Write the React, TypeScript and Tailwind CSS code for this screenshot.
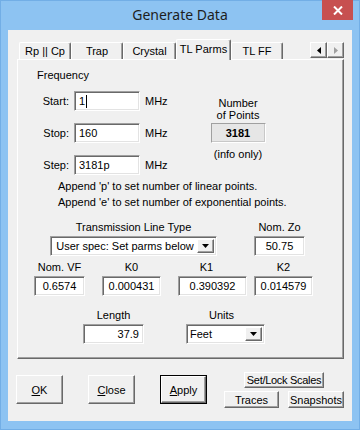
import React from 'react';

const sunken =
  'border border-t-[#a0a0a0] border-l-[#a0a0a0] border-b-white border-r-white shadow-[inset_1px_1px_0_#696969,inset_-1px_-1px_0_#e3e3e3] bg-white';
const raised =
  'border border-t-white border-l-white border-b-[#696969] border-r-[#696969] shadow-[inset_-1px_-1px_0_#a0a0a0] bg-[#f0f0f0]';

const DownArrow: React.FC<{ color?: string }> = ({ color = '#000' }) => (
  <svg width="7" height="4" viewBox="0 0 7 4">
    <path d="M0 0h7L3.5 4z" fill={color} />
  </svg>
);

const Field: React.FC<{ value: string; w: string; align?: string; caret?: boolean }> = ({
  value,
  w,
  align = 'text-center',
  caret,
}) => (
  <div className={`${sunken} ${w} h-[20px] px-[4px] flex items-center leading-[14px] ${align}`}>
    <span className="flex-1">
      {value}
      {caret && <span className="inline-block w-px h-[13px] bg-black align-middle ml-px" />}
    </span>
  </div>
);

const Combo: React.FC<{ value: string; w: string; center?: boolean }> = ({ value, w, center }) => (
  <div className={`${sunken} ${w} h-[20px] flex items-center p-[2px]`}>
    <span className={`flex-1 leading-[14px] ${center ? 'text-center' : 'pl-[1px]'}`}>{value}</span>
    <div className={`${raised} w-[17px] h-full flex items-center justify-center`}>
      <DownArrow />
    </div>
  </div>
);

const Tab: React.FC<{ label: string; w: string; active?: boolean }> = ({ label, w, active }) => (
  <div
    className={`${w} ${
      active ? 'h-[21px] -mb-px relative z-10 pb-[3px]' : 'h-[17px]'
    } bg-[#f0f0f0] border-t border-l border-r border-t-white border-l-white border-r-[#696969] rounded-t-[2px] shadow-[inset_-1px_0_0_#a0a0a0] flex items-center justify-center leading-[14px]`}
  >
    {label}
  </div>
);

const Btn: React.FC<{ children: React.ReactNode; cls: string }> = ({ children, cls }) => (
  <div className={`${raised} ${cls} flex items-center justify-center leading-[14px] whitespace-nowrap`}>
    {children}
  </div>
);

export default function App() {
  return (
    <div
      className="w-[360px] h-[430px] bg-[#8dc3f2] border border-[#72aee6] flex flex-col text-[11px] text-black"
      style={{ fontFamily: '"Liberation Sans", Arial, sans-serif' }}
    >
      {/* title bar */}
      <div className="h-[29px] flex items-start shrink-0">
        <div className="w-[37px]" />
        <div
          className="flex-1 text-center text-[14px] leading-[28px] text-[#1e1e1e]"
          style={{ fontFamily: '"Noto Sans", "Open Sans", sans-serif' }}
        >
          Generate Data
        </div>
        <div className="w-[31px] h-[20px] -mt-px mr-[6px] bg-[#c75050] flex items-center justify-center">
          <svg width="10" height="9" viewBox="0 0 10 9">
            <path d="M1 0.5l8 8M9 0.5l-8 8" stroke="#fff" strokeWidth="2" />
          </svg>
        </div>
      </div>

      {/* client */}
      <div className="mx-[7px] h-[391px] bg-[#f0f0f0] flex flex-col">
        {/* tabs */}
        <div className="flex items-end pl-[11px] pt-[9px] h-[29px]">
          <Tab label="Rp || Cp" w="w-[52px]" />
          <Tab label="Trap" w="w-[52px]" />
          <Tab label="Crystal" w="w-[53px]" />
          <Tab label="TL Parms" w="w-[55px]" active />
          <Tab label="TL FF" w="w-[52px]" />
          <div className="self-start mt-[3px] ml-[27px] flex">
            <div className={`${raised} w-[17px] h-[16px] flex items-center justify-center`}>
              <svg width="4" height="7" viewBox="0 0 4 7">
                <path d="M4 0v7L0 3.5z" fill="#000" />
              </svg>
            </div>
            <div className={`${raised} w-[17px] h-[16px] flex items-center justify-center`}>
              <svg width="4" height="7" viewBox="0 0 4 7">
                <path d="M0 0v7L4 3.5z" fill="#a0a0a0" />
              </svg>
            </div>
          </div>
        </div>

        {/* panel */}
        <div className="ml-[9px] w-[327px] h-[300px] border border-t-white border-l-white border-b-[#696969] border-r-[#696969] shadow-[inset_-1px_-1px_0_#a0a0a0] flex flex-col">
          {/* frequency + number of points */}
          <div className="flex">
            <div className="pl-[19px] w-[180px] flex flex-col">
              <div className="mt-[8px] leading-[14px]">Frequency</div>
              {[
                ['Start:', '1', 'mt-[9px]'],
                ['Stop:', '160', 'mt-[12px]'],
                ['Step:', '3181p', 'mt-[12px]'],
              ].map(([lab, val, mt], i) => (
                <div key={lab} className={`flex items-center ${mt}`}>
                  <div className="w-[32px] text-right leading-[14px]">{lab}</div>
                  <Field value={val} w="w-[66px] ml-[5px]" align="text-left" caret={i === 0} />
                  <div className="ml-[5px] leading-[14px]">MHz</div>
                </div>
              ))}
            </div>
            <div className="w-[80px] flex flex-col items-center">
              <div className="mt-[37px] leading-[12px] text-center">
                Number
                <br />
                of Points
              </div>
              <div className="mt-[2px] w-[55px] h-[20px] bg-[#e6e6e6] border border-t-[#a0a0a0] border-l-[#a0a0a0] border-b-white border-r-white shadow-[inset_-1px_-1px_0_#c8c8c8] flex items-center justify-center font-bold">
                3181
              </div>
              <div className="mt-[4px] leading-[14px]">(info only)</div>
            </div>
          </div>

          {/* hints */}
          <div className="mt-[3px] pl-[40px] leading-[16px]">
            <div>Append 'p' to set number of linear points.</div>
            <div>Append 'e' to set number of exponential points.</div>
          </div>

          {/* line type */}
          <div className="mt-[10px] pl-[32px] flex">
            <div className="w-[167px] flex flex-col items-center">
              <div className="leading-[14px]">Transmission Line Type</div>
              <div className="mt-[2px]">
                <Combo value="User spec: Set parms below" w="w-[167px]" center />
              </div>
            </div>
            <div className="ml-[37px] w-[51px] flex flex-col items-center">
              <div className="leading-[14px]">Nom. Zo</div>
              <div className="mt-[2px]">
                <Field value="50.75" w="w-[51px]" />
              </div>
            </div>
          </div>

          {/* parameters */}
          <div className="mt-[4px] pl-[16px] flex gap-[17px]">
            <div className="flex flex-col items-center">
              <div className="leading-[14px]">Nom. VF</div>
              <div className="mt-[2px]">
                <Field value="0.6574" w="w-[51px]" />
              </div>
            </div>
            <div className="flex flex-col items-center">
              <div className="leading-[14px]">K0</div>
              <div className="mt-[2px]">
                <Field value="0.000431" w="w-[59px]" />
              </div>
            </div>
            <div className="flex flex-col items-center">
              <div className="leading-[14px] pr-[12px]">K1</div>
              <div className="mt-[2px]">
                <Field value="0.390392" w="w-[69px]" />
              </div>
            </div>
            <div className="flex flex-col items-center -ml-[10px]">
              <div className="leading-[14px]">K2</div>
              <div className="mt-[2px]">
                <Field value="0.014579" w="w-[59px]" />
              </div>
            </div>
          </div>

          {/* length / units */}
          <div className="mt-[12px] pl-[65px] flex gap-[42px]">
            <div className="flex flex-col items-center">
              <div className="leading-[14px]">Length</div>
              <div className="mt-[2px]">
                <Field value="37.9" w="w-[61px]" align="text-right" />
              </div>
            </div>
            <div className="flex flex-col">
              <div className="leading-[14px] pl-[23px]">Units</div>
              <div className="mt-[2px]">
                <Combo value="Feet" w="w-[79px]" />
              </div>
            </div>
          </div>
        </div>

        {/* buttons */}
        <div className="flex items-start pl-[8px]">
          <Btn cls="mt-[16px] w-[47px] h-[29px]">
            <span>
              <u>O</u>K
            </span>
          </Btn>
          <Btn cls="mt-[16px] ml-[25px] w-[47px] h-[29px]">
            <span>
              <u>C</u>lose
            </span>
          </Btn>
          <div className="mt-[16px] ml-[25px] w-[47px] h-[29px] border border-black flex">
            <Btn cls="flex-1">
              <span>
                <u>A</u>pply
              </span>
            </Btn>
          </div>
          <div className="mt-[13px] ml-[17px] flex flex-col">
            <Btn cls="ml-[20px] w-[80px] h-[16px] tracking-[-0.3px]">Set/Lock Scales</Btn>
            <div className="mt-[3px] flex">
              <Btn cls="w-[55px] h-[17px]">Traces</Btn>
              <Btn cls="ml-[9px] w-[56px] h-[17px]">Snapshots</Btn>
            </div>
          </div>
        </div>
      </div>
    </div>
  );
}
